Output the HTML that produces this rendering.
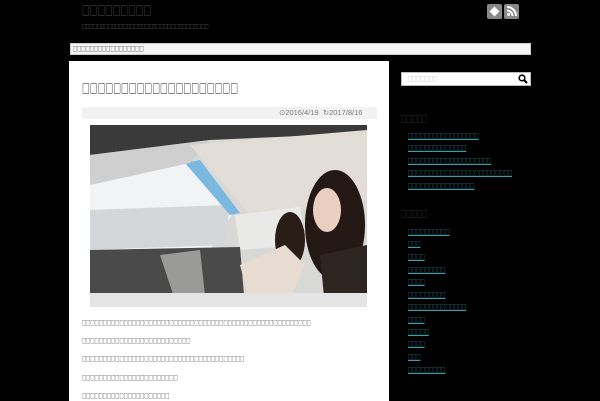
<!DOCTYPE html>
<html><head><meta charset="utf-8"><style>
*{margin:0;padding:0;box-sizing:border-box}
body{width:600px;height:400px;background:#000;position:relative;overflow:hidden;font-family:"Liberation Sans",sans-serif}
.a{position:absolute;white-space:nowrap;line-height:1}
.t{font-family:"Noto Sans CJK JP",sans-serif;transform-origin:0 0;transform:scaleX(.64);line-height:1;font-weight:bold}
.lk{color:#3f9aaa;text-decoration:underline;font-size:6.5px}
.p{font-size:6.5px;color:#111}
</style></head><body>
<div class="a t" style="left:82px;top:5px;font-size:12px;color:#555;transform:scaleX(.64)">□□□□□□□□□</div>
<div class="a t" style="left:82px;top:24px;font-size:6px;color:#777;transform:scaleX(.62)">□□□□□□□□□□□□□□□□□□□□□□□□□□□□□□□□□□</div>
<div class="a" style="left:487px;top:4px;width:15px;height:15px;background:#888;border-radius:2px"><div style="position:absolute;left:4px;top:4px;width:7px;height:7px;background:#fff;transform:rotate(45deg)"></div></div>
<div class="a" style="left:504px;top:4px;width:15px;height:15px;background:#888;border-radius:2px"><svg width="15" height="15"><circle cx="4.5" cy="10.5" r="1.5" fill="#fff"/><path d="M3 6.5a5.5 5.5 0 0 1 5.5 5.5M3 3a9 9 0 0 1 9 9" stroke="#fff" stroke-width="2" fill="none"/></svg></div>
<div class="a" style="left:70px;top:43px;width:461px;height:12px;background:#f4f4f4;border:1px solid #ccc"></div>
<div class="a t p" style="left:73px;top:45px;color:#000">□□□□□□□□□□□□□□□□□</div>
<div class="a" style="left:69px;top:61px;width:320px;height:340px;background:#fff"></div>
<div class="a t" style="left:82px;top:83px;font-size:12px;color:#111;transform:scaleX(.65)">□□□□□□□□□□□□□□□□□□□□</div>
<div class="a" style="left:82px;top:107px;width:295px;height:12px;background:#f2f2f2"></div>
<div class="a" style="left:279px;top:109px;font-size:7.5px;color:#777">⊙2016/4/19 &nbsp;↻2017/8/16</div>
<svg class="a" style="left:90px;top:125px" width="277" height="182" viewBox="0 0 277 182">
<rect width="277" height="182" fill="#d8d8d6"/>
<polygon points="0,35 100,38 145,85 120,125 0,125" fill="#f1f3f5"/>
<polygon points="0,85 140,80 135,120 0,125" fill="#d4d7da"/>
<polygon points="95,38 110,35 150,88 140,90" fill="#7ab8e0"/>
<polygon points="0,0 277,0 277,8 120,15 0,30" fill="#3a3a3a"/>
<polygon points="0,30 120,15 100,38 0,60" fill="#cfcfcf"/>
<polygon points="100,20 277,5 277,75 160,90" fill="#e2ded7"/>
<polygon points="145,90 210,82 215,120 150,125" fill="#e9e9e8"/>
<polygon points="0,125 150,122 155,182 0,182" fill="#4a4a4a"/>
<polygon points="70,130 110,125 115,170 85,175" fill="#9a9a98"/>
<ellipse cx="200" cy="115" rx="15" ry="28" fill="#2a1d18"/>
<polygon points="150,140 195,120 215,140 200,175 160,178" fill="#e8dcd2"/>
<ellipse cx="245" cy="100" rx="30" ry="55" fill="#241814"/>
<ellipse cx="237" cy="85" rx="14" ry="22" fill="#e8cfc0"/>
<polygon points="230,130 277,120 277,182 235,182" fill="#2e2420"/>
<rect y="168" width="277" height="14" fill="#e4e4e4"/>
</svg>
<div class="a t p" style="left:82px;top:319px">□□□□□□□□□□□□□□□□□□□□□□□□□□□□□□□□□□□□□□□□□□□□□□□□□□□□□□□</div>
<div class="a t p" style="left:82px;top:337px">□□□□□□□□□□□□□□□□□□□□□□□□□□</div>
<div class="a t p" style="left:82px;top:355px">□□□□□□□□□□□□□□□□□□□□□□□□□□□□□□□□□□□□□□□</div>
<div class="a t p" style="left:82px;top:374px">□□□□□□□□□□□□□□□□□□□□□□□</div>
<div class="a t p" style="left:82px;top:392px">□□□□□□□□□□□□□□□□□□□□□</div>
<div class="a" style="left:401px;top:72px;width:130px;height:14px;background:#fff;border:1px solid #bbb"></div>
<div class="a t p" style="left:408px;top:75px;color:#aaa">□□□□□□□</div>
<svg class="a" style="left:518px;top:74px" width="10" height="10"><circle cx="4" cy="4" r="2.8" stroke="#000" stroke-width="1.6" fill="none"/><path d="M6 6l3 3" stroke="#000" stroke-width="2"/></svg>
<div class="a t" style="left:401px;top:116px;font-size:8px;color:#444;transform:scaleX(.66)">□□□□□</div>
<div class="a t" style="left:401px;top:211px;font-size:8px;color:#444;transform:scaleX(.66)">□□□□□</div>
<div class="a t lk" style="left:408px;top:132px">□□□□□□□□□□□□□□□□□</div>
<div class="a t lk" style="left:408px;top:144px">□□□□□□□□□□□□□□</div>
<div class="a t lk" style="left:408px;top:157px">□□□□□□□□□□□□□□□□□□□□</div>
<div class="a t lk" style="left:408px;top:169px">□□□□□□□□□□□□□□□□□□□□□□□□□</div>
<div class="a t lk" style="left:408px;top:182px">□□□□□□□□□□□□□□□□</div>
<div class="a t lk" style="left:408px;top:228px">□□□□□□□□□□</div>
<div class="a t lk" style="left:408px;top:240px">□□□</div>
<div class="a t lk" style="left:408px;top:253px">□□□□</div>
<div class="a t lk" style="left:408px;top:266px">□□□□□□□□□</div>
<div class="a t lk" style="left:408px;top:278px">□□□□</div>
<div class="a t lk" style="left:408px;top:291px">□□□□□□□□□</div>
<div class="a t lk" style="left:408px;top:303px">□□□□□□□□□□□□□□</div>
<div class="a t lk" style="left:408px;top:316px">□□□□</div>
<div class="a t lk" style="left:408px;top:328px">□□□□□</div>
<div class="a t lk" style="left:408px;top:340px">□□□□</div>
<div class="a t lk" style="left:408px;top:353px">□□□</div>
<div class="a t lk" style="left:408px;top:366px">□□□□□□□□□</div>
</body></html>
